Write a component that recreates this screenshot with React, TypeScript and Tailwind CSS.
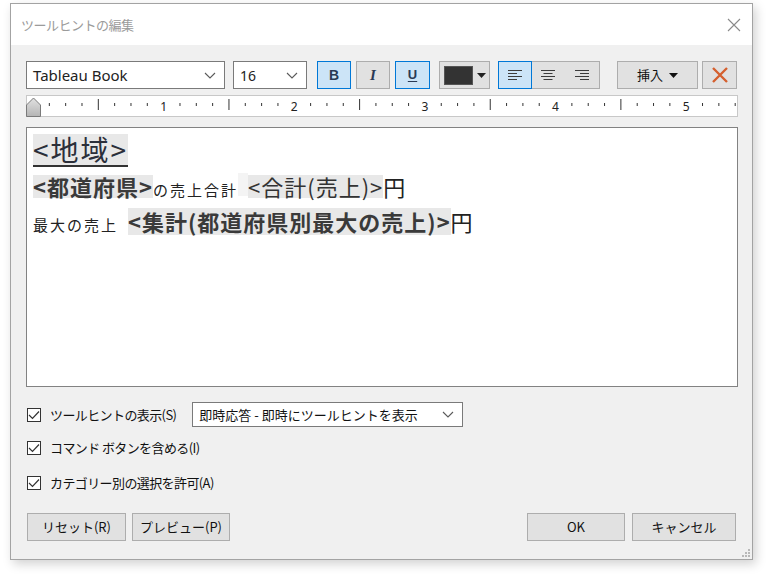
import React from "react";

const Chevron = ({ className = "" }: { className?: string }) => (
  <svg width="12" height="7" viewBox="0 0 12 7" className={className}>
    <path d="M1 1 L6 6 L11 1" fill="none" stroke="#5a5a5a" strokeWidth="1.1" />
  </svg>
);

const AlignIcon = ({ mode }: { mode: "left" | "center" | "right" }) => {
  const rows = [
    { y: 1.5, w: 14 },
    { y: 4.5, w: 9 },
    { y: 7.5, w: 14 },
    { y: 10.5, w: 9 },
  ];
  return (
    <svg width="14" height="12" viewBox="0 0 14 12">
      {rows.map((r, i) => {
        const x = mode === "left" ? 0 : mode === "right" ? 14 - r.w : (14 - r.w) / 2;
        return <line key={i} x1={x} x2={x + r.w} y1={r.y} y2={r.y} stroke="#3c3c3c" strokeWidth="1" />;
      })}
    </svg>
  );
};

const Ruler = () => {
  const ticks = [];
  for (let k = 0; k <= 43; k++) {
    const x = 7 + k * 16.33;
    if (k % 8 === 0 && k > 0) {
      ticks.push(
        <text key={k} x={x} y={16} textAnchor="middle" fontSize="12" fill="#222" fontFamily="'Noto Sans', sans-serif">
          {k / 8}
        </text>
      );
    } else if (k % 4 === 0 && k > 0) {
      ticks.push(<line key={k} x1={x} x2={x} y1={4} y2={15} stroke="#333" strokeWidth="1" />);
    } else {
      ticks.push(<line key={k} x1={x} x2={x} y1={8} y2={11} stroke="#333" strokeWidth="1" />);
    }
  }
  return (
    <div className="h-[22px] bg-white border border-[#c8c8c8]">
      <svg width="710" height="22" viewBox="0 0 710 22" className="block -mt-px -ml-px">
        {ticks}
        <defs>
          <linearGradient id="mk" x1="0" x2="0" y1="0" y2="1">
            <stop offset="0" stopColor="#e2e2e2" />
            <stop offset="1" stopColor="#b4b4b4" />
          </linearGradient>
        </defs>
        <polygon points="7.5,3 14.5,10 14.5,21.5 0.5,21.5 0.5,10" fill="url(#mk)" stroke="#7a7a7a" strokeWidth="1" />
      </svg>
    </div>
  );
};

const Check = () => (
  <div className="w-[14px] h-[14px] border border-[#333] bg-white flex items-center justify-center shrink-0">
    <svg width="12" height="10" viewBox="0 0 12 10">
      <path d="M1 5 L4.5 8.5 L11 1.5" fill="none" stroke="#333" strokeWidth="1.2" />
    </svg>
  </div>
);

const Btn = ({ children, w }: { children: React.ReactNode; w: string }) => (
  <button className={`${w} h-[28px] bg-[#e1e1e1] border border-[#adadad] text-[13px] text-[#111] flex items-center justify-center`}>
    {children}
  </button>
);

export default function App() {
  return (
    <div className="w-[771px] h-[574px] bg-white pl-[10px] pt-[3px] font-['Noto_Sans_CJK_JP','Noto_Sans',sans-serif] text-[#111]">
      <div className="w-[743px] h-[557px] border border-[#a3a3a3] shadow-[3px_4px_10px_rgba(0,0,0,0.18)] flex flex-col bg-[#f0f0f0]">
        {/* title bar */}
        <div className="h-[41px] bg-white flex items-center justify-between pl-[10px] pr-[11px]">
          <span className="text-[13px] text-[#9b9b9b] tracking-[-0.5px]">ツールヒントの編集</span>
          <svg width="14" height="14" viewBox="0 0 14 14">
            <path d="M1 1 L13 13 M13 1 L1 13" stroke="#8a8a8a" strokeWidth="1.1" />
          </svg>
        </div>

        <div className="flex-1 pl-[15px] pr-[14px] pt-[16px] flex flex-col relative">
          {/* toolbar */}
          <div className="h-[28px] flex items-stretch">
            <div className="w-[199px] bg-white border border-[#7a7a7a] flex items-center justify-between pl-[6px] pr-[8px]">
              <span className="text-[15px] font-['Noto_Sans',sans-serif] text-[#222]">Tableau Book</span>
              <Chevron />
            </div>
            <div className="w-[74px] ml-[8px] bg-white border border-[#7a7a7a] flex items-center justify-between pl-[6px] pr-[8px]">
              <span className="text-[14px] font-['Noto_Sans',sans-serif] text-[#222]">16</span>
              <Chevron />
            </div>
            <div className="w-[34px] ml-[10px] bg-[#cce4f7] border border-[#0078d7] flex items-center justify-center">
              <span className="text-[14px] font-bold font-['Liberation_Sans',sans-serif] text-[#2a3a55]">B</span>
            </div>
            <div className="w-[34px] ml-[5px] bg-[#e1e1e1] border border-[#adadad] flex items-center justify-center">
              <span className="text-[15px] font-bold italic font-['Liberation_Serif',serif] text-[#2a3a55]">I</span>
            </div>
            <div className="w-[35px] ml-[5px] bg-[#cce4f7] border border-[#0078d7] flex items-center justify-center">
              <span className="text-[13px] font-bold underline underline-offset-2 font-['Liberation_Sans',sans-serif] text-[#2a3a55]">U</span>
            </div>
            <div className="w-[51px] ml-[9px] bg-[#e1e1e1] border border-[#adadad] flex items-center pl-[4px] gap-[4px]">
              <div className="w-[29px] h-[19px] bg-[#333] border border-[#555]" />
              <svg width="9" height="5" viewBox="0 0 9 5">
                <polygon points="0,0 9,0 4.5,5" fill="#222" />
              </svg>
            </div>
            <div className="w-[102px] ml-[8px] flex border border-[#adadad] bg-[#e1e1e1]">
              <div className="w-[34px] -m-px bg-[#cce4f7] border border-[#0078d7] flex items-center justify-center">
                <AlignIcon mode="left" />
              </div>
              <div className="flex-1 flex items-center justify-center">
                <AlignIcon mode="center" />
              </div>
              <div className="flex-1 flex items-center justify-center">
                <AlignIcon mode="right" />
              </div>
            </div>
            <div className="w-[81px] ml-[17px] bg-[#e1e1e1] border border-[#adadad] flex items-center justify-center gap-[6px]">
              <span className="text-[13px] text-[#111]">挿入</span>
              <svg width="9" height="5" viewBox="0 0 9 5">
                <polygon points="0,0 9,0 4.5,5" fill="#111" />
              </svg>
            </div>
            <div className="w-[35px] ml-[4px] bg-[#e1e1e1] border border-[#adadad] flex items-center justify-center">
              <svg width="18" height="18" viewBox="0 0 18 18">
                <path d="M2 2 L16 16 M16 2 L2 16" stroke="#d5602f" strokeWidth="2.4" />
              </svg>
            </div>
          </div>

          {/* ruler */}
          <div className="mt-[6px]">
            <Ruler />
          </div>

          {/* editor */}
          <div className="mt-[10px] h-[260px] bg-white border border-[#828282] pl-[6px] pt-[6px] text-[#333]">
            <div className="h-[33px] flex items-end">
              <span className="bg-[#e8e8e8] text-[28px] leading-[31px] tracking-[2px] border-b-[2px] border-[#333] text-[#2b2f3a]">
                &lt;地域&gt;
              </span>
            </div>
            <div className="mt-[6px] h-[23px] flex items-baseline leading-[23px]">
              <span className="bg-[#e8e8e8] text-[22px] tracking-[1px] font-bold text-[#3a3a3a]">&lt;都道府県&gt;</span>
              <span className="text-[15px] tracking-[2px] text-[#222]">の売上合計</span>
              <span className="w-[10px] h-[23px] bg-[#f4f4f4]" />
              <span className="bg-[#e8e8e8] text-[22px] tracking-[1px] text-[#333]">&lt;合計(売上)&gt;</span>
              <span className="text-[22px] text-[#222]">円</span>
            </div>
            <div className="mt-[12px] h-[27px] flex items-baseline leading-[27px]">
              <span className="text-[15px] tracking-[2px] text-[#222]">最大の売上</span>
              <span className="w-[10px]" />
              <span className="bg-[#e8e8e8] text-[22px] tracking-[1px] font-bold text-[#3a3a3a]">
                &lt;集計(都道府県別最大の売上)&gt;
              </span>
              <span className="text-[22px] text-[#222]">円</span>
            </div>
          </div>

          {/* options */}
          <div className="mt-[15px] h-[25px] flex items-center pl-[1px]">
            <Check />
            <span className="ml-[9px] text-[13px] tracking-[-0.6px]">ツールヒントの表示(S)</span>
            <div className="ml-[16px] w-[271px] h-[25px] bg-white border border-[#7a7a7a] flex items-center justify-between pl-[6px] pr-[8px]">
              <span className="text-[13px] text-[#111]">即時応答 - 即時にツールヒントを表示</span>
              <Chevron />
            </div>
          </div>
          <div className="mt-[11px] h-[20px] flex items-center pl-[1px]">
            <Check />
            <span className="ml-[9px] text-[13px] tracking-[-0.6px]">コマンド ボタンを含める(I)</span>
          </div>
          <div className="mt-[15px] h-[20px] flex items-center pl-[1px]">
            <Check />
            <span className="ml-[9px] text-[13px] tracking-[-0.6px]">カテゴリー別の選択を許可(A)</span>
          </div>

          {/* buttons */}
          <div className="mt-[20px] flex items-center pl-[1px] pr-[2px]">
            <Btn w="w-[99px]">リセット(R)</Btn>
            <div className="ml-[6px]">
              <Btn w="w-[98px]">プレビュー(P)</Btn>
            </div>
            <div className="ml-auto">
              <Btn w="w-[98px]">OK</Btn>
            </div>
            <div className="ml-[7px]">
              <Btn w="w-[104px]">キャンセル</Btn>
            </div>
          </div>

          {/* resize grip */}
          <svg width="10" height="10" viewBox="0 0 10 10" className="absolute right-[2px] bottom-[2px]">
            {[
              [8, 0],
              [8, 3],
              [5, 3],
              [8, 6],
              [5, 6],
              [2, 6],
            ].map(([x, y], i) => (
              <rect key={i} x={x} y={y + 2} width="2" height="2" fill="#b8b8b8" />
            ))}
          </svg>
        </div>
      </div>
    </div>
  );
}
